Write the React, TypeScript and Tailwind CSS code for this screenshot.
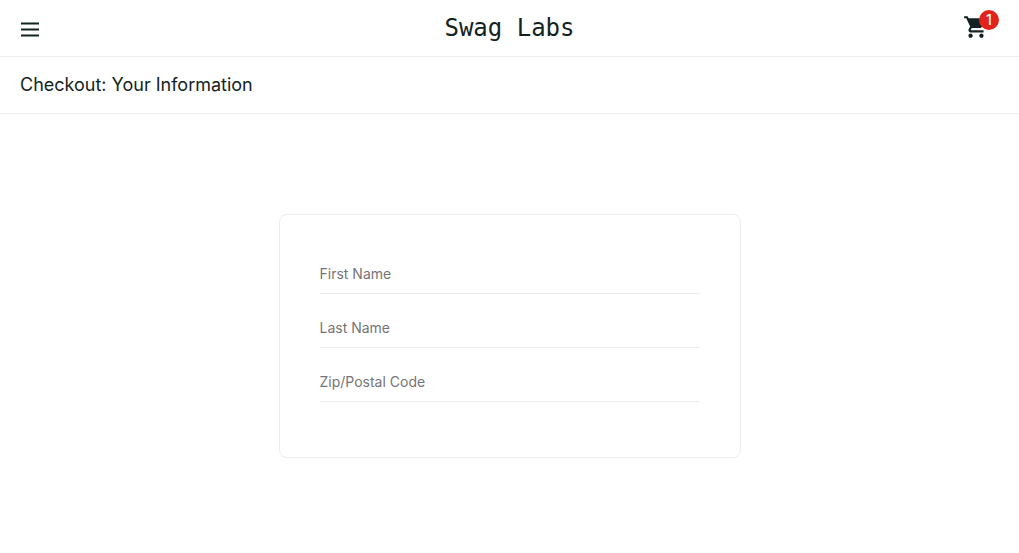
import { useState } from "react";
import { MdShoppingCart } from "react-icons/md";

const fields = [
  { id: "first-name", label: "First Name" },
  { id: "last-name", label: "Last Name" },
  { id: "postal-code", label: "Zip/Postal Code" },
];

function MenuIcon() {
  return (
    <svg className="h-[15px] w-5" viewBox="0 0 20 15" fill="none" aria-hidden="true">
      <path d="M1 1.5H19M1 7.5H19M1 13.5H19" stroke="#132322" strokeWidth="2" />
    </svg>
  );
}

function Header({ itemCount }: { itemCount: number }) {
  return (
    <header className="grid h-[57px] grid-cols-[1fr_auto_1fr] items-center border-b border-[#ededed] px-5">
      <button type="button" aria-label="Open Menu" className="mt-0.5 justify-self-start">
        <MenuIcon />
      </button>
      <div className="font-['DejaVu_Sans_Mono',monospace] text-2xl">Swag Labs</div>
      <a
        href="#cart"
        aria-label="Shopping cart"
        className="relative flex h-10 w-10 items-start justify-self-end pt-1.5"
      >
        <MdShoppingCart className="ml-1 size-[26px]" aria-hidden="true" />
        <span className="absolute top-0.5 right-0 flex size-5 items-center justify-center rounded-full bg-[#e2231a] text-sm leading-5 font-medium text-white">
          {itemCount}
        </span>
      </a>
    </header>
  );
}

export default function App() {
  const [values, setValues] = useState<Record<string, string>>({});

  return (
    <div className="min-h-screen bg-white font-['Inter',sans-serif] text-[#132322]">
      <Header itemCount={1} />
      <div className="flex h-[57px] items-center border-b border-[#ededed] px-5">
        <h1 className="text-lg font-normal">Checkout: Your Information</h1>
      </div>
      <main className="px-5 py-[100px]">
        <form className="mx-auto max-w-[462px] rounded-lg border border-[#ededed] px-10 pt-10 pb-[55px]">
          <div className="flex flex-col gap-[15px]">
            {fields.map(({ id, label }) => (
              <label key={id} htmlFor={id} className="block border-b border-[#ededed]">
                <input
                  id={id}
                  type="text"
                  aria-label={label}
                  placeholder={label}
                  value={values[id] ?? ""}
                  onChange={(e) => setValues({ ...values, [id]: e.target.value })}
                  className="block h-[38px] w-full pb-0.5 text-sm outline-none placeholder:text-[#757575]"
                />
              </label>
            ))}
          </div>
        </form>
      </main>
    </div>
  );
}
